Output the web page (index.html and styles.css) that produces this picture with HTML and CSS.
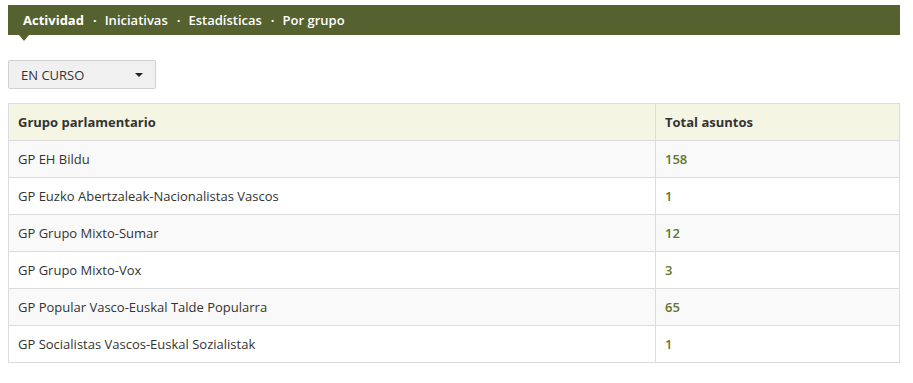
FILE: index.html
```html
<!DOCTYPE html>
<html lang="es">
<head>
<meta charset="utf-8">
<title>Actividad</title>
<link rel="stylesheet" href="styles.css">
</head>
<body>
<nav class="tabs">
  <a class="tab active" href="#">Actividad</a>
  <span class="sep">·</span>
  <a class="tab" href="#">Iniciativas</a>
  <span class="sep">·</span>
  <a class="tab" href="#">Estadísticas</a>
  <span class="sep">·</span>
  <a class="tab" href="#">Por grupo</a>
</nav>
<div class="filter">
  <button class="select">EN CURSO <span class="caret"></span></button>
</div>
<table class="grid">
  <thead>
    <tr><th class="c1">Grupo parlamentario</th><th>Total asuntos</th></tr>
  </thead>
  <tbody>
    <tr><td class="c1">GP EH Bildu</td><td class="num">158</td></tr>
    <tr><td class="c1">GP Euzko Abertzaleak-Nacionalistas Vascos</td><td class="num">1</td></tr>
    <tr><td class="c1">GP Grupo Mixto-Sumar</td><td class="num">12</td></tr>
    <tr><td class="c1">GP Grupo Mixto-Vox</td><td class="num">3</td></tr>
    <tr><td class="c1">GP Popular Vasco-Euskal Talde Popularra</td><td class="num">65</td></tr>
    <tr><td class="c1">GP Socialistas Vascos-Euskal Sozialistak</td><td class="num">1</td></tr>
  </tbody>
</table>
</body>
</html>
```
FILE: styles.css
```css
* { box-sizing: border-box; }
body {
  margin: 5px 13px 0 8px;
  font-family: "Open Sans", "Liberation Sans", sans-serif;
  font-size: 13px;
  color: #333;
  background: #fff;
}
.tabs {
  display: flex;
  align-items: center;
  height: 30px;
  background: #55612f;
  padding-left: 15px;
}
.tab {
  position: relative;
  color: #fff;
  text-decoration: none;
  font-size: 13px;
  font-weight: 600;
  line-height: 30px;
}
.tab.active { font-weight: 700; }
.tab.active::after {
  content: "";
  position: absolute;
  left: -4px;
  top: 30px;
  border-left: 5px solid transparent;
  border-right: 5px solid transparent;
  border-top: 6px solid #55612f;
}
.sep {
  color: #fff;
  padding: 0 8px 0 9px;
  font-weight: 700;
}
.filter { margin-top: 25px; }
.select {
  display: flex;
  align-items: center;
  justify-content: space-between;
  width: 148px;
  height: 29px;
  padding: 0 12px 0 12px;
  background: #f0f0f0;
  border: 1px solid #d0d0d0;
  border-radius: 2px;
  font-family: inherit;
  font-size: 13px;
  color: #333;
}
.caret {
  border-left: 4px solid transparent;
  border-right: 4px solid transparent;
  border-top: 4px solid #222;
}
.grid {
  margin-top: 14px;
  width: 892px;
  border-collapse: collapse;
  border: 1px solid #dcdcdc;
}
.grid th, .grid td {
  height: 37px;
  padding: 0 9px;
  text-align: left;
  border: 1px solid #dcdcdc;
  vertical-align: middle;
}
.grid th {
  background: #f5f5e4;
  font-weight: 700;
  color: #333;
}
.grid .c1 { width: 647px; }
.grid tbody tr:nth-child(odd) td { background: #f9f9f9; }
.grid .num { color: #64742e; font-weight: 600; }
```
